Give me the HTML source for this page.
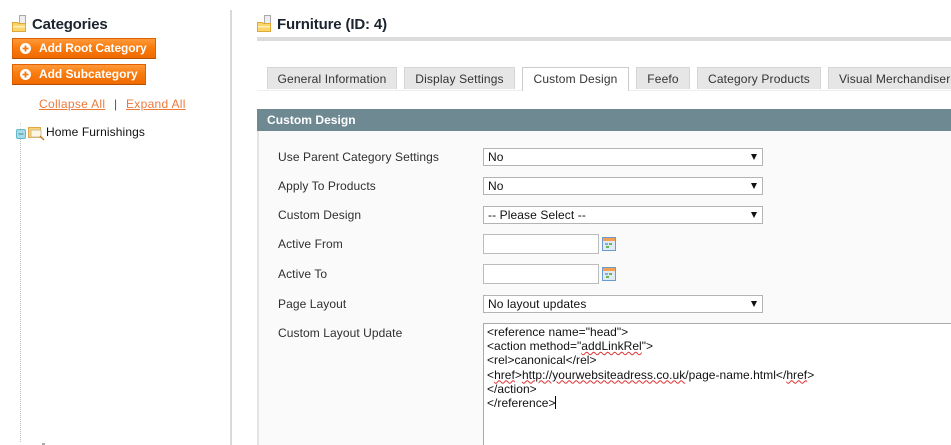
<!DOCTYPE html>
<html><head><meta charset="utf-8"><style>
html,body{margin:0;padding:0;background:#fff;overflow:hidden;width:951px;height:445px}
#w{width:951px;height:445px;position:relative;overflow:hidden;font-family:"Liberation Sans",Arial,sans-serif;font-size:12px;color:#2f2f2f}
.a{position:absolute;white-space:nowrap}
.btn{position:absolute;left:12px;height:19px;background:linear-gradient(#ff9a3a,#f97b0e 45%,#f06a00);border:1px solid #e06000;border-bottom:1px solid #b34d00;color:#fff;font-weight:bold;line-height:18px;padding-left:26px;box-sizing:content-box;white-space:nowrap}
.btn svg{position:absolute;left:6px;top:3px}
.tab{position:absolute;top:67px;height:22px;background:#e6e6e6;border:1px solid #d6d6d6;border-bottom:0;box-sizing:border-box;line-height:23px;text-align:center;color:#333;letter-spacing:.15px;white-space:nowrap;overflow:hidden}
.lb{position:absolute;left:278px;line-height:14px;color:#2f2f2f;letter-spacing:.08px;white-space:nowrap}
.sel{position:absolute;left:483px;width:280px;height:18px;box-sizing:border-box;background:#fff;border:1px solid #b4b4b4;line-height:16px;padding-left:4px;color:#111;white-space:nowrap;letter-spacing:.1px}
.sel:after{content:"";position:absolute;right:5px;top:5px;border-left:3.5px solid transparent;border-right:3.5px solid transparent;border-top:6px solid #111}
.inp{position:absolute;left:483px;width:116px;height:20px;box-sizing:border-box;background:#fff;border:1px solid #bbb}
.cal{position:absolute;left:602px}
.tx{position:absolute;left:483px;top:323px;width:480px;height:130px;box-sizing:border-box;background:#fff;border:1px solid #aaa;padding:1px 0 0 3px;line-height:14.2px;color:#111;white-space:nowrap;letter-spacing:.04px}
.sp{text-decoration:underline wavy #e03030 1px;text-underline-offset:1px}
</style></head><body><div id="w">

<div class="a" style="left:230px;top:10px;width:2px;height:435px;background:#d9d9d9"></div>

<svg class="a" style="left:12px;top:15px" width="16" height="17" viewBox="0 0 16 17"><rect x="7.500" y=".5" width="6" height="11" fill="#eee" stroke="#aaa"/><path d="M.5 7.500h5l1 1h7v8H.5z" fill="#fbd46a" stroke="#e0a838"/><rect x="1" y="11" width="12" height="1.500" fill="#fff2b8"/></svg>
<div class="a" style="left:32px;top:16px;font-size:15px;line-height:18px;font-weight:bold;color:#1c2430;letter-spacing:-.2px">Categories</div>

<div class="btn" style="top:38px;width:116px;letter-spacing:-.1px">Add Root Category<svg width="13" height="13" viewBox="0 0 13 13"><circle cx="6.500" cy="6.500" r="5.500" fill="#fff"/><path d="M6.500 3.500v6M3.500 6.500h6" stroke="#f07a10" stroke-width="1.800"/></svg></div>
<div class="btn" style="top:64px;width:106px;letter-spacing:-.05px">Add Subcategory<svg width="13" height="13" viewBox="0 0 13 13"><circle cx="6.500" cy="6.500" r="5.500" fill="#fff"/><path d="M6.500 3.500v6M3.500 6.500h6" stroke="#f07a10" stroke-width="1.800"/></svg></div>

<div class="a" style="left:39px;top:97px;line-height:14px;color:#ea7a3c;text-decoration:underline;letter-spacing:.3px">Collapse All</div>
<div class="a" style="left:114px;top:97px;line-height:14px;color:#555">|</div>
<div class="a" style="left:126px;top:97px;line-height:14px;color:#ea7a3c;text-decoration:underline;letter-spacing:.3px">Expand All</div>

<div class="a" style="left:20px;top:123px;height:6px;border-left:1px dotted #ddd"></div>
<div class="a" style="left:20px;top:139px;height:303px;border-left:1px dotted #bbb"></div>
<svg class="a" style="left:16px;top:129px" width="10" height="10" viewBox="0 0 10 10"><rect x=".5" y=".5" width="9" height="9" rx="1.500" fill="#a8dce6" stroke="#5fb8cc"/><path d="M2.500 5h5" stroke="#4a8a9a"/></svg>
<svg class="a" style="left:28px;top:126px" width="17" height="15" viewBox="0 0 17 15"><path d="M.5 1.500h12v10H.5z" fill="#fbd070" stroke="#e0a840"/><rect x="3" y="4" width="10" height="7" fill="#fdf6e0" stroke="#c8c0a0"/><path d="M12 10l4 4" stroke="#c87a30" stroke-width="1.500"/></svg>
<div class="a" style="left:46px;top:125px;line-height:14px;color:#111;letter-spacing:.1px">Home Furnishings</div>
<div class="a" style="left:42px;top:443px;width:3px;height:2px;background:#aaa"></div>

<svg class="a" style="left:257px;top:15px" width="16" height="17" viewBox="0 0 16 17"><rect x="7.500" y=".5" width="6" height="11" fill="#eee" stroke="#aaa"/><path d="M.5 7.500h5l1 1h7v8H.5z" fill="#fbd46a" stroke="#e0a838"/><rect x="1" y="11" width="12" height="1.500" fill="#fff2b8"/></svg>
<div class="a" style="left:277px;top:16px;font-size:15px;line-height:18px;font-weight:bold;color:#1c2430;letter-spacing:-.15px">Furniture (ID: 4)</div>
<div class="a" style="left:257px;top:37px;width:694px;height:4px;background:#dcdcdc"></div>

<div class="a" style="left:257px;top:90px;width:694px;height:1px;background:#eee"></div>
<div class="tab" style="left:267px;width:130px">General Information</div>
<div class="tab" style="left:404px;width:111px">Display Settings</div>
<div class="tab" style="left:522px;width:107px;height:24px;background:#fff;border-color:#ccc;border-bottom:0">Custom Design</div>
<div class="tab" style="left:636px;width:54px">Feefo</div>
<div class="tab" style="left:697px;width:124px">Category Products</div>
<div class="tab" style="left:828px;width:130px;text-align:left;padding-left:10px">Visual Merchandiser</div>

<div class="a" style="left:257px;top:131px;width:694px;height:314px;background:#fafafa"></div>
<div class="a" style="left:257px;top:109px;width:2px;height:336px;background:#e4e4e4"></div>
<div class="a" style="left:257px;top:109px;width:694px;height:22px;background:#6f8992;color:#fff;font-weight:bold;line-height:22px;text-indent:10px;letter-spacing:.05px">Custom Design</div>

<div class="lb" style="top:150px">Use Parent Category Settings</div>
<div class="lb" style="top:179px">Apply To Products</div>
<div class="lb" style="top:208px">Custom Design</div>
<div class="lb" style="top:237px">Active From</div>
<div class="lb" style="top:267px">Active To</div>
<div class="lb" style="top:297px">Page Layout</div>
<div class="lb" style="top:326px">Custom Layout Update</div>

<div class="sel" style="top:148px">No</div>
<div class="sel" style="top:177px">No</div>
<div class="sel" style="top:206px">-- Please Select --</div>
<div class="inp" style="top:234px"></div>
<svg class="cal" style="top:237px" width="14" height="14" viewBox="0 0 14 14"><rect x=".5" y=".5" width="13" height="13" fill="#dfeaf6" stroke="#6a9ad0"/><rect x="1" y="1" width="12" height="3" fill="#f5a050"/><rect x="3" y="6" width="3" height="2" fill="#7ab0d8"/><rect x="7" y="6" width="3" height="2" fill="#6ab84a"/><rect x="4" y="9" width="3" height="2" fill="#6ab84a"/></svg>
<div class="inp" style="top:264px"></div>
<svg class="cal" style="top:267px" width="14" height="14" viewBox="0 0 14 14"><rect x=".5" y=".5" width="13" height="13" fill="#dfeaf6" stroke="#6a9ad0"/><rect x="1" y="1" width="12" height="3" fill="#f5a050"/><rect x="3" y="6" width="3" height="2" fill="#7ab0d8"/><rect x="7" y="6" width="3" height="2" fill="#6ab84a"/><rect x="4" y="9" width="3" height="2" fill="#6ab84a"/></svg>
<div class="sel" style="top:295px">No layout updates</div>

<div class="tx">&lt;reference name="head"&gt;<br>&lt;action method="<span class="sp">addLinkRel</span>"&gt;<br>&lt;rel&gt;canonical&lt;/rel&gt;<br>&lt;<span class="sp">href</span>&gt;<span class="sp">http://yourwebsiteadress.co.uk</span>/page-name.html&lt;/<span class="sp">href</span>&gt;<br>&lt;/action&gt;<br>&lt;/reference&gt;</div>
<div class="a" style="left:555px;top:396px;width:1px;height:13px;background:#000"></div>
</div></body></html>
